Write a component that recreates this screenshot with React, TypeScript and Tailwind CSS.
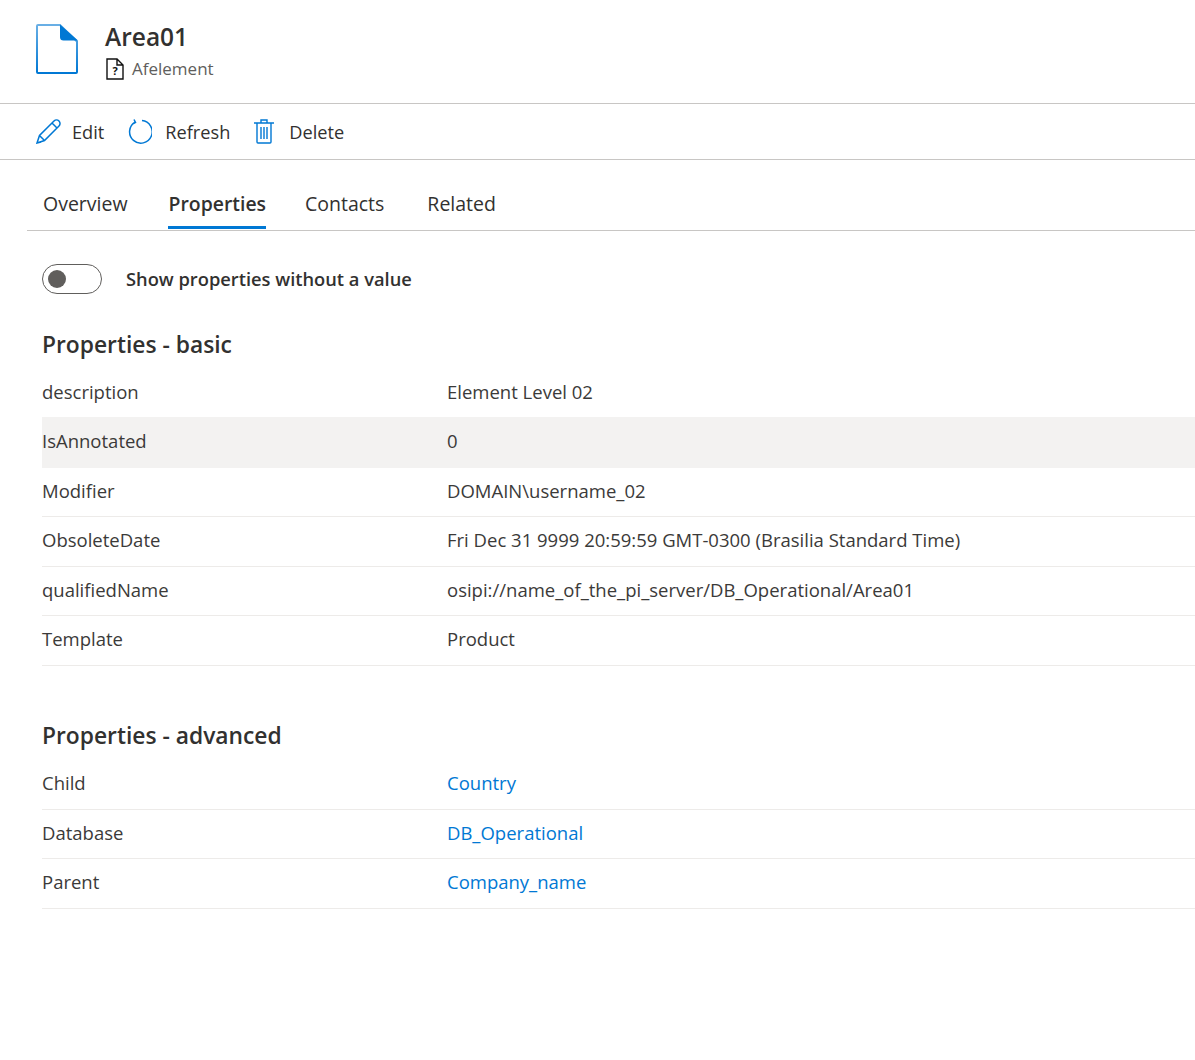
const basic = [
  ["description", "Element Level 02"],
  ["IsAnnotated", "0"],
  ["Modifier", "DOMAIN\\username_02"],
  ["ObsoleteDate", "Fri Dec 31 9999 20:59:59 GMT-0300 (Brasilia Standard Time)"],
  ["qualifiedName", "osipi://name_of_the_pi_server/DB_Operational/Area01"],
  ["Template", "Product"],
];

const advanced = [
  ["Child", "Country"],
  ["Database", "DB_Operational"],
  ["Parent", "Company_name"],
];

function Row({ name, value, link, hover, plain }: { name: string; value: string; link?: boolean; hover?: boolean; plain?: boolean }) {
  const line = hover || plain ? "border-[#f3f2f1]" : "border-[#edebe9]";
  return (
    <div className={`flex h-[49.5px] items-center border-b pb-[2px] text-[18.5px] ${line} ${hover ? "bg-[#f3f2f1]" : ""}`}>
      <div className="w-[405px] shrink-0 text-[#3b3a39]">{name}</div>
      <div className={link ? "text-[#0078d4]" : "text-[#3b3a39]"}>{value}</div>
    </div>
  );
}

export default function App() {
  return (
    <div className="h-[1060px] w-[1195px] overflow-hidden bg-white text-[#323130] [font-family:'Open_Sans',sans-serif]">
      <div className="flex h-[104px] border-b border-[#c8c6c4] pl-[35px] pt-[23px]">
        <svg width="44" height="52" viewBox="0 0 44 52" fill="none">
          <defs>
            <linearGradient id="docStroke" x1="0" y1="0" x2="0" y2="1">
              <stop offset="0" stopColor="#69afe5" />
              <stop offset="1" stopColor="#0078d4" />
            </linearGradient>
          </defs>
          <path d="M3 2H25L42 18.5V49a1 1 0 0 1-1 1H3a1 1 0 0 1-1-1V3a1 1 0 0 1 1-1z" fill="#fff" stroke="url(#docStroke)" strokeWidth="2" />
          <path d="M25 1.5V14a3.5 3.5 0 0 0 3.5 3.5H43z" fill="#0078d4" />
        </svg>
        <div className="ml-[26px]">
          <div className="text-[24.5px] font-semibold leading-[28px]">Area01</div>
          <div className="mt-[5px] flex items-center">
            <svg className="ml-[1px]" width="18" height="22" viewBox="0 0 18 22" fill="none" stroke="#111" strokeWidth="1.4">
              <path d="M1 1h10l6 6v14H1z M11 1v6h6" />
              <text x="9" y="17" fontSize="11" fontWeight="700" fill="#111" stroke="none" textAnchor="middle">?</text>
            </svg>
            <span className="ml-[8px] text-[17px] text-[#605e5c]">Afelement</span>
          </div>
        </div>
      </div>
      <div className="flex h-[56px] items-center border-b border-[#c8c6c4] pl-[36px] text-[18.2px]">
        <svg width="25" height="25" viewBox="0 0 25 25" fill="none" stroke="#0078d4" strokeWidth="1.5">
          <path d="M1 24l2.5-7.5L18 2a2.8 2.8 0 0 1 5 5L8.5 21.5z M3.5 16.5l5 5 M1 24l4-1 M16 4l5 5" />
        </svg>
        <span className="ml-[11px] mt-[2px]">Edit</span>
        <svg className="ml-[23px]" width="25" height="25" viewBox="0 0 25 25" fill="none" stroke="#0078d4" strokeWidth="1.5">
          <path d="M8 3.2A11.3 11.3 0 1 0 15 1.6 M7 0.5l1.5 3-3 1.5" />
        </svg>
        <span className="ml-[13px] mt-[2px]">Refresh</span>
        <svg className="ml-[24px]" width="20" height="25" viewBox="0 0 20 25" fill="none" stroke="#0078d4" strokeWidth="1.4">
          <path d="M0 4h20 M7 4V1h6v3 M3 4v19a1 1 0 0 0 1 1h12a1 1 0 0 0 1-1V4 M7 8v12 M10 8v12 M13 8v12" />
        </svg>
        <span className="ml-[15px] mt-[2px]">Delete</span>
      </div>
      <div className="ml-[27px] flex h-[71px] items-end border-b border-[#c8c6c4] pl-[16px] text-[19.5px]">
        <div className="mb-[1px] mr-[40px] h-[41px] pt-[1px]">Overview</div>
        <div className="mb-[1px] mr-[39px] h-[41px] border-b-[3px] border-[#0078d4] pl-[1px] pt-[1px] text-[19.4px] font-semibold">Properties</div>
        <div className="mb-[1px] mr-[43px] h-[41px] pt-[1px]">Contacts</div>
        <div className="mb-[1px] h-[41px] pt-[1px]">Related</div>
      </div>
      <div className="pl-[42px]">
        <div className="mt-[33px] flex items-center">
          <div className="flex h-[30px] w-[60px] items-center rounded-full border border-[#605e5c] pl-[5px]">
            <div className="h-[18px] w-[18px] rounded-full bg-[#605e5c]" />
          </div>
          <span className="ml-[24px] text-[18.3px] font-semibold">Show properties without a value</span>
        </div>
        <div className="mt-[35px] text-[22.8px] font-semibold leading-[32px]">Properties - basic</div>
        <div className="mt-[7.5px]">
          {basic.map(([n, v], i) => (
            <Row key={n} name={n} value={v} hover={i === 1} plain={i === 0} />
          ))}
        </div>
        <div className="mt-[54px] text-[22.8px] font-semibold leading-[32px]">Properties - advanced</div>
        <div className="mt-[8.5px]">
          {advanced.map(([n, v]) => (
            <Row key={n} name={n} value={v} link />
          ))}
        </div>
      </div>
    </div>
  );
}
